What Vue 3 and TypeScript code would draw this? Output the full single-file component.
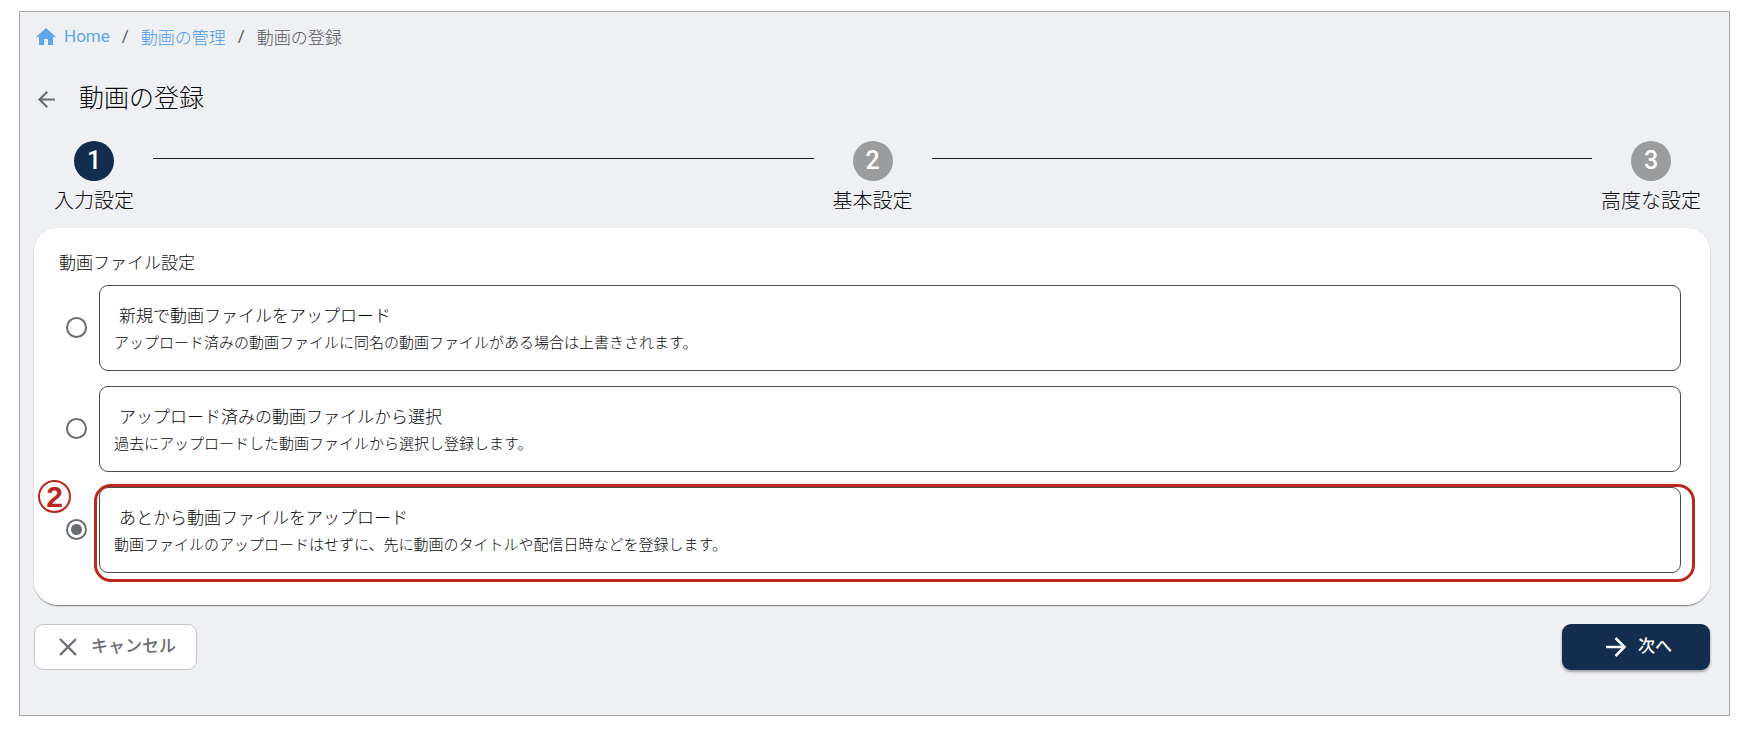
<script setup lang="ts">
import { ref } from 'vue'

interface UploadOption {
  id: string
  title: string
  description: string
}

const steps: string[] = ['入力設定', '基本設定', '高度な設定']
const currentStep = ref(1)

const options: UploadOption[] = [
  {
    id: 'new',
    title: '新規で動画ファイルをアップロード',
    description: 'アップロード済みの動画ファイルに同名の動画ファイルがある場合は上書きされます。',
  },
  {
    id: 'existing',
    title: 'アップロード済みの動画ファイルから選択',
    description: '過去にアップロードした動画ファイルから選択し登録します。',
  },
  {
    id: 'later',
    title: 'あとから動画ファイルをアップロード',
    description: '動画ファイルのアップロードはせずに、先に動画のタイトルや配信日時などを登録します。',
  },
]
const selected = ref('later')
</script>

<template>
  <main class="page">
    <nav class="breadcrumb">
      <a href="#" class="crumb-home">
        <svg class="home-icon" viewBox="2 3 20 17" aria-hidden="true">
          <path d="M10 20v-6h4v6h5v-8h3L12 3 2 12h3v8z" fill="currentColor" />
        </svg>
        <span>Home</span>
      </a>
      <span class="slash">/</span>
      <a href="#">動画の管理</a>
      <span class="slash">/</span>
      <span>動画の登録</span>
    </nav>

    <header class="heading">
      <button type="button" class="back" aria-label="戻る">
        <svg viewBox="4 4 16 16" aria-hidden="true">
          <path d="M20 11H7.83l5.59-5.59L12 4l-8 8 8 8 1.41-1.41L7.83 13H20z" fill="currentColor" />
        </svg>
      </button>
      <h1>動画の登録</h1>
    </header>

    <ol class="stepper">
      <template v-for="(step, i) in steps" :key="step">
        <li v-if="i > 0" class="line" role="presentation"></li>
        <li class="step">
          <span class="circle" :class="{ active: currentStep === i + 1 }">{{ i + 1 }}</span>
          <span class="step-label">{{ step }}</span>
        </li>
      </template>
    </ol>

    <fieldset class="card">
      <legend>動画ファイル設定</legend>
      <div v-for="option in options" :key="option.id" class="option">
        <div class="radio-cell">
          <input :id="option.id" v-model="selected" type="radio" name="source" :value="option.id" />
          <span v-if="option.id === selected" class="marker">2</span>
        </div>
        <label :for="option.id" class="box">
          <span class="option-title">{{ option.title }}</span>
          <span class="option-text">{{ option.description }}</span>
          <span v-if="option.id === selected" class="highlight"></span>
        </label>
      </div>
    </fieldset>

    <footer class="actions">
      <button type="button" class="btn cancel">
        <svg viewBox="0 0 18 18" aria-hidden="true">
          <path d="M1 1L17 17M17 1L1 17" fill="none" stroke="currentColor" stroke-width="2.4" />
        </svg>
        <span>キャンセル</span>
      </button>
      <button type="button" class="btn next">
        <svg viewBox="0 0 20 20" aria-hidden="true">
          <path d="M0 10H18M9.5 1L18.5 10L9.5 19" fill="none" stroke="currentColor" stroke-width="2.6" />
        </svg>
        <span>次へ</span>
      </button>
    </footer>
  </main>
</template>

<style>
body {
  background: #fff;
}
</style>

<style scoped>
.page {
  box-sizing: border-box;
  margin: 11px 14px 0 19px;
  padding: 10px 19px 45px 14px;
  border: 1px solid #a3a5a8;
  background: #eff0f4;
  color: #08090a;
  font-family: Roboto, "Noto Sans CJK JP", sans-serif;
  font-weight: 300;
}

.breadcrumb {
  display: flex;
  align-items: center;
  height: 28px;
  gap: 12px;
  padding-left: 2px;
  font-size: 17px;
  color: #55575a;
}

.breadcrumb a {
  color: #4a9bea;
  text-decoration: none;
}

.breadcrumb .crumb-home {
  display: flex;
  align-items: center;
  gap: 8px;
  color: #5ea6ec;
}

.slash,
.crumb-home {
  font-weight: 400;
}

.home-icon {
  width: 20px;
  height: 17px;
}

.heading {
  display: flex;
  align-items: center;
  height: 40px;
  margin-top: 29px;
  gap: 24px;
  padding-left: 4px;
}

.back {
  display: flex;
  padding: 0;
  border: 0;
  background: none;
  color: #6b6d70;
}

.back svg {
  width: 17px;
  height: 17px;
}

h1 {
  margin: 0;
  font-size: 25px;
  line-height: 40px;
  font-weight: 300;
}

.stepper {
  display: flex;
  margin: 22px 0 0;
  padding: 0 0 0 1px;
  list-style: none;
}

.step {
  display: flex;
  flex-direction: column;
  align-items: center;
  width: 118px;
}

.circle {
  width: 40px;
  height: 40px;
  border-radius: 50%;
  background: #9b9c9e;
  color: #fff;
  font-size: 25px;
  font-weight: 500;
  line-height: 40px;
  text-align: center;
}

.circle.active {
  background: #122d4e;
}

.step-label {
  font-size: 20px;
  line-height: 40px;
  white-space: nowrap;
}

.line {
  flex: 1;
  height: 1px;
  margin-top: 17px;
  background: #1d1e20;
}

.card {
  display: flex;
  flex-direction: column;
  gap: 15px;
  min-width: 0;
  margin: 7px 0 0;
  padding: 22px 29px 32px 25px;
  border: 0;
  border-radius: 24px;
  background: #fff;
  box-shadow: 0 2px 1px -1px rgba(0, 0, 0, 0.3), 0 1px 1px rgba(0, 0, 0, 0.16), 0 1px 3px rgba(0, 0, 0, 0.12);
}

legend {
  float: left;
  padding: 0;
  font-size: 17px;
  line-height: 26px;
  margin-bottom: -6px;
}

.option {
  display: flex;
  align-items: center;
}

.radio-cell {
  position: relative;
  display: flex;
  flex: none;
  width: 33px;
  margin-left: 7px;
  padding-bottom: 2px;
}

input {
  box-sizing: border-box;
  width: 21px;
  height: 21px;
  margin: 0;
  border: 2px solid #696c70;
  border-radius: 50%;
  appearance: none;
  background: #fff;
}

input:checked {
  background: radial-gradient(circle, #696c70 5px, #fff 6px);
}

.marker {
  position: absolute;
  top: -39px;
  left: -28px;
  box-sizing: border-box;
  width: 33px;
  height: 33px;
  border: 2px solid #ba271c;
  border-radius: 50%;
  color: #ba271c;
  font-family: "Liberation Sans", Arial, sans-serif;
  font-size: 30px;
  font-weight: 700;
  line-height: 30px;
  text-align: center;
}

.box {
  position: relative;
  display: flex;
  flex: 1;
  flex-direction: column;
  min-width: 0;
  padding: 16px 14px 13px;
  border: 1px solid #48494b;
  border-radius: 9px;
}

.option-title {
  padding-left: 5px;
  font-size: 17px;
  line-height: 28px;
}

.option-text {
  font-size: 15px;
  line-height: 27px;
}

.highlight {
  position: absolute;
  inset: -4px -15px -10px -6px;
  border: 3px solid #ba271c;
  border-radius: 17px;
  pointer-events: none;
}

.actions {
  display: flex;
  justify-content: space-between;
  margin-top: 19px;
}

.btn {
  display: flex;
  align-items: center;
  justify-content: center;
  box-sizing: border-box;
  height: 46px;
  border-radius: 9px;
  font-family: inherit;
  font-size: 17px;
  font-weight: 500;
  line-height: 24px;
}

.btn span {
  padding-bottom: 2px;
}

.cancel {
  gap: 14px;
  padding: 0 20px 0 24px;
  border: 1px solid #c4c5c8;
  background: #fff;
  color: #696c70;
}

.cancel svg {
  width: 18px;
  height: 18px;
}

.next {
  gap: 12px;
  padding: 0 38px 0 44px;
  border: 0;
  background: #122d4e;
  color: #fff;
  box-shadow: 0 2px 3px rgba(0, 0, 0, 0.35);
}

.next svg {
  width: 20px;
  height: 20px;
}
</style>
